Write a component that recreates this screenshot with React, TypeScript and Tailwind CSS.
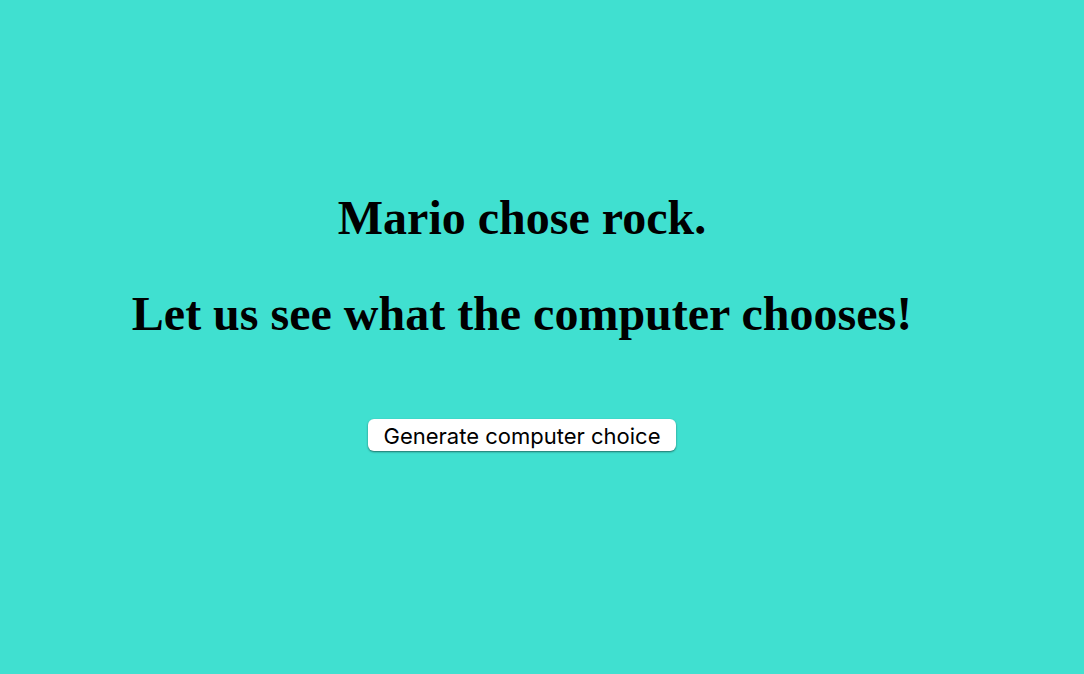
export default function App() {
  return (
    <main className="flex min-h-screen flex-col items-center bg-[#40e0d0] pt-[190px] pr-10 text-center text-black">
      <h1 className="font-['Liberation_Serif',serif] text-[48px] leading-[56px] font-bold">Mario chose rock.</h1>
      <h1 className="mt-10 font-['Liberation_Serif',serif] text-[48px] leading-[56px] font-bold">
        Let us see what the computer chooses!
      </h1>
      <button
        type="button"
        className="mt-[77px] rounded-md bg-white px-4 pt-0.5 font-[Inter,sans-serif] text-[22px] leading-[30px] shadow-[0_1px_2px_rgba(0,0,0,0.5)]"
      >
        Generate computer choice
      </button>
    </main>
  );
}
